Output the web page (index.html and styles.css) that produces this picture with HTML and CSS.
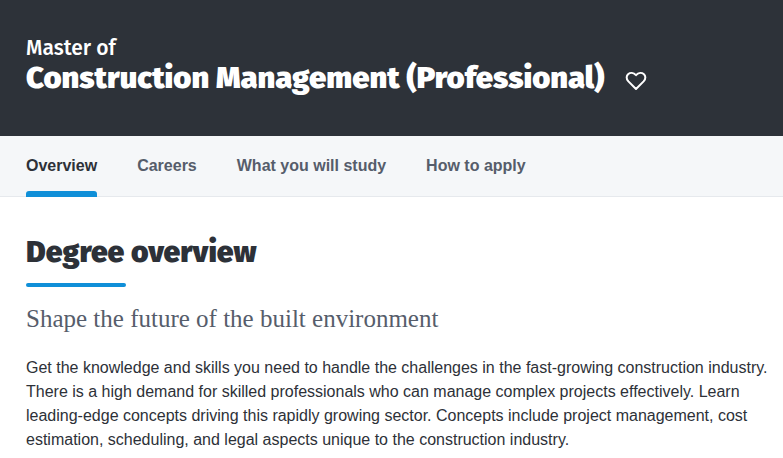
FILE: index.html
```html
<!DOCTYPE html>
<html lang="en">

<head>
  <meta charset="UTF-8">
  <meta name="viewport" content="width=device-width, initial-scale=1.0">
  <title>Master of Construction Management (Professional)</title>
  <link rel="stylesheet" href="styles.css">
</head>

<body>
  <header class="banner">
    <h1>
      <span class="award">Master of</span>
      <span class="course">Construction Management (Professional)</span>
    </h1>
    <button class="favourite" type="button" aria-label="Save course">
      <svg viewBox="0 0 22 20" width="22" height="20" aria-hidden="true">
        <path d="M11 18 L3.4 10.4 C-1.8 4.8 5.8 -1.6 11 4.2 C16.2 -1.6 23.8 4.8 18.6 10.4 Z" />
      </svg>
    </button>
  </header>

  <nav class="tabs">
    <a class="active" href="#overview">Overview</a>
    <a href="#careers">Careers</a>
    <a href="#study">What you will study</a>
    <a href="#apply">How to apply</a>
  </nav>

  <main id="overview">
    <h2>Degree overview</h2>
    <p class="lead">Shape the future of the built environment</p>
    <p class="text">Get the knowledge and skills you need to handle the challenges in the fast-growing construction industry. There is a high demand for skilled professionals who can manage complex projects effectively. Learn leading-edge concepts driving this rapidly growing sector. Concepts include project management, cost estimation, scheduling, and legal aspects unique to the construction industry.</p>
  </main>
</body>

</html>
```

FILE: styles.css
```css
body {
  margin: 0;
  background-color: #fff;
  color: #2d3138;
  font-family: "Liberation Sans", Arial, sans-serif;
  font-size: 16px;
  line-height: 24px;
}

.banner {
  display: flex;
  align-items: flex-end;
  gap: 21px;
  padding: 36px 26px 40px;
  background-color: #2d3239;
  color: #fff;
}

.banner h1 {
  margin: 0;
  font-family: "Fira Sans", "Noto Sans", sans-serif;
}

.award {
  display: block;
  font-size: 21px;
  font-weight: 500;
  line-height: 24px;
}

.course {
  display: block;
  font-size: 31px;
  font-weight: 900;
  line-height: 36px;
}

.favourite {
  padding: 0;
  border: none;
  background: none;
  cursor: pointer;
}

.favourite svg {
  display: block;
  margin-bottom: 5px;
  fill: none;
  stroke: #fff;
  stroke-width: 2;
  stroke-linejoin: round;
}

.tabs {
  display: flex;
  gap: 40px;
  padding: 0 26px;
  background-color: #f5f7f9;
  border-bottom: 1px solid #e6e9ed;
}

.tabs a {
  display: flex;
  flex-direction: column;
  gap: 13px;
  margin-bottom: -1px;
  padding-top: 18px;
  color: #565d6b;
  font-weight: bold;
  text-decoration: none;
}

.tabs a::after {
  content: "";
  height: 6px;
  border-radius: 3px 3px 0 0;
}

.tabs .active {
  color: #2d3138;
}

.tabs .active::after {
  background-color: #0f8fd8;
}

main {
  padding: 35px 8px 8px 26px;
}

h2 {
  margin: 0;
  font-family: "Fira Sans", "Noto Sans", sans-serif;
  font-size: 30px;
  font-weight: 900;
  line-height: 40px;
}

h2::after {
  content: "";
  display: block;
  width: 100px;
  height: 4px;
  margin-top: 11px;
  border-radius: 2px;
  background-color: #0f8fd8;
}

.lead {
  margin: 16px 0 21px;
  color: #565d6b;
  font-family: "Source Serif Pro", "Liberation Serif", serif;
  font-size: 25px;
  line-height: 32px;
}

.text {
  margin: 0;
}
```
